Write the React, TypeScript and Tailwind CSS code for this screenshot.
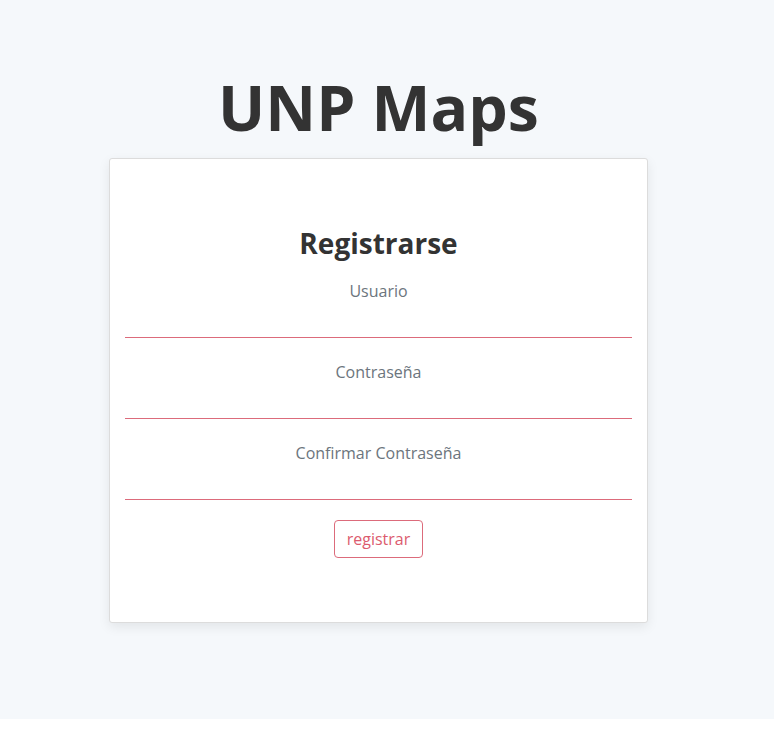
export default function App() {
  const fields = ["Usuario", "Contraseña", "Confirmar Contraseña"];
  return (
    <div className="w-full bg-white" style={{ fontFamily: '"Open Sans", sans-serif' }}>
      <div className="h-[719px] w-full bg-[#f5f8fb]">
        <div className="flex w-[757px] flex-col items-center">
          <h1 className="mt-[66px] text-[62.5px] font-bold leading-[82px] text-[#333333]">UNP Maps</h1>
          <div className="mt-[10px] w-[539px] rounded-[3px] border border-[#dcdcdc] bg-white px-[15px] pb-[64px] pt-[68px] shadow-[0_4px_12px_rgba(0,0,0,0.08)]">
            <h2 className="text-center text-[28px] font-bold leading-[33px] text-[#333333]">Registrarse</h2>
            <div className="mt-[19px] flex flex-col">
              {fields.map((f, i) => (
                <div key={f} className={i > 0 ? "mt-[22px]" : ""}>
                  <div className="text-center text-[16px] leading-[24px] text-[#6c757d]">{f}</div>
                  <div className="h-[34px]" />
                  <div className="h-px bg-[#dc6b7b]" />
                </div>
              ))}
            </div>
            <div className="mt-[20px] flex justify-center">
              <button className="h-[38px] rounded-[4px] border border-[#dc6b7b] px-[12px] text-[16px] leading-[24px] text-[#dc5b6e]">
                registrar
              </button>
            </div>
          </div>
        </div>
      </div>
      <div className="h-[23px]" />
    </div>
  );
}
